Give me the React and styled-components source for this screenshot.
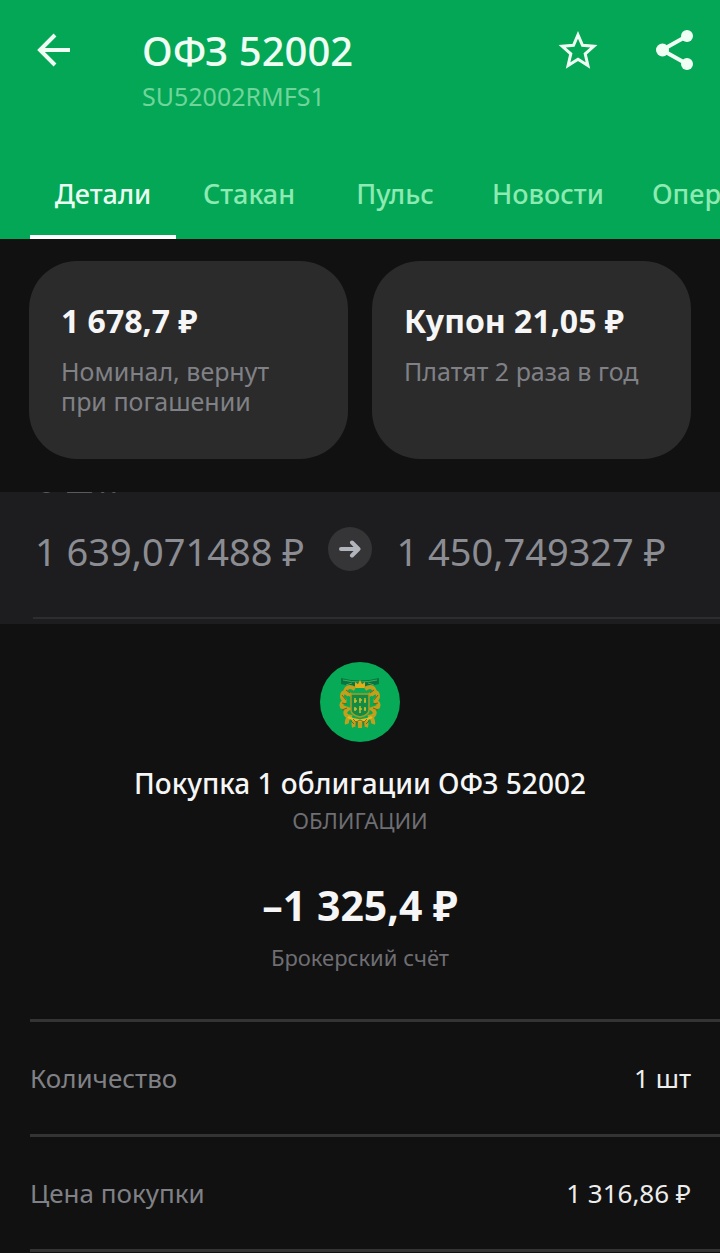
import React, { useState } from "react";
import styled, { createGlobalStyle } from "styled-components";

const color = {
  green: "#04a755",
  page: "#111111",
  card: "#2b2b2b",
  band: "#1d1d1f",
  line: "#343434",
  text: "#f6f6f6",
  muted: "#808186",
};

const GlobalStyle = createGlobalStyle`
  *, *::before, *::after { box-sizing: border-box; }
  body {
    margin: 0;
    background: ${color.page};
    color: ${color.text};
    font-family: "Noto Sans", "Open Sans", sans-serif;
    overflow-x: hidden;
  }
  h1, h2, p, dl, dd, dt { margin: 0; font-weight: 400; }
`;

const Header = styled.header`
  background: ${color.green};
  color: #effff4;
`;

const TopBar = styled.div`
  display: flex;
  align-items: flex-start;
  padding: 24px 21px 0 30px;
  height: 148px;
`;

const IconButton = styled.button`
  display: flex;
  align-items: center;
  justify-content: center;
  width: 48px;
  height: 52px;
  padding: 0;
  border: 0;
  background: none;
  color: inherit;
  cursor: pointer;
`;

const Heading = styled.div`
  flex: 1;
  margin-left: 64px;
`;

const Title = styled.h1`
  && { font-weight: 500; }
  font-size: 40px;
  line-height: 54px;
`;

const Ticker = styled.p`
  font-size: 25px;
  line-height: 36px;
  color: #6fd59b;
`;

const Actions = styled.div`
  display: flex;
  gap: 49px;
`;

const Tabs = styled.nav`
  display: flex;
  padding-left: 30px;
  overflow: hidden;
`;

const Tab = styled.button`
  flex: none;
  min-width: 146px;
  height: 91px;
  padding: 3px 24px 0;
  border: 0;
  border-bottom: 4px solid ${(p) => (p.$active ? "#ffffff" : "transparent")};
  background: none;
  color: ${(p) => (p.$active ? "#e9fff1" : "#8ceab2")};
  font: inherit;
  font-size: 27px;
  font-weight: 500;
  cursor: pointer;
`;

const Cards = styled.section`
  display: grid;
  grid-template-columns: 1fr 1fr;
  gap: 24px;
  padding: 22px 29px 33px;
`;

const Card = styled.article`
  min-height: 198px;
  padding: 36px 32px;
  border-radius: 48px;
  background: ${color.card};
`;

const CardValue = styled.h2`
  && { font-weight: 700; }
  font-size: 32px;
  line-height: 48px;
  white-space: nowrap;
`;

const CardNote = styled.p`
  margin-top: 11px;
  font-size: 25px;
  line-height: 30px;
  color: ${color.muted};
`;

const Band = styled.section`
  background: ${color.band};
  padding-bottom: 5px;
`;

const ScrolledRow = styled.div`
  display: flex;
  align-items: flex-end;
  height: 2px;
  padding-left: 36px;
  overflow: hidden;
  color: #5a5a5c;
  font-size: 34px;
  line-height: 28px;
`;

const PriceChange = styled.div`
  display: flex;
  align-items: center;
  gap: 24px;
  margin-left: 33px;
  padding: 0 0 14px 2px;
  height: 125px;
  border-bottom: 2px solid #2d2d2f;
`;

const Price = styled.span`
  padding-top: 4px;
  font-size: 38px;
  line-height: 54px;
  color: #8c8d93;
  white-space: nowrap;
`;

const ArrowBadge = styled.span`
  flex: none;
  display: flex;
  align-items: center;
  justify-content: center;
  width: 44px;
  height: 44px;
  border-radius: 50%;
  background: #353537;
  color: #b2b4bb;
`;

const Summary = styled.section`
  display: flex;
  flex-direction: column;
  align-items: center;
  padding-top: 37px;
  height: 395px;
  text-align: center;
`;

const OperationTitle = styled.h2`
  && { font-weight: 500; }
  margin-top: 20px;
  font-size: 28px;
  line-height: 40px;
`;

const Caption = styled.p`
  font-size: 22px;
  line-height: 34px;
  color: #6e6e73;
`;

const Amount = styled.p`
  && { font-weight: 700; }
  margin: 40px 0 7px;
  font-size: 41px;
  line-height: 56px;
`;

const Details = styled.dl`
  margin-left: 30px;
  border-top: 3px solid ${color.line};
`;

const DetailRow = styled.div`
  display: flex;
  align-items: center;
  justify-content: space-between;
  height: 115px;
  padding-right: 29px;
  border-bottom: 3px solid ${color.line};
  font-size: 26px;
  line-height: 36px;
`;

const Label = styled.dt`
  color: ${color.muted};
`;

const Value = styled.dd`
  color: #ededed;
`;

const BackIcon = () => (
  <svg width="34" height="34" viewBox="0 0 34 34" fill="none" stroke="currentColor" strokeWidth="4" aria-hidden="true">
    <path d="M33 17H4M18 2 3 17l15 15" />
  </svg>
);

const StarIcon = () => (
  <svg width="40" height="40" viewBox="0 0 40 40" fill="none" stroke="currentColor" strokeWidth="3" aria-hidden="true">
    <path d="M20 4.800 24.500 15.300 35.800 16.300 27.200 23.800 29.900 35.500 20 29.300 10.100 35.500 12.800 23.800 4.200 16.300 15.500 15.300Z" />
  </svg>
);

const ShareIcon = () => (
  <svg width="40" height="42" viewBox="0 0 40 42" aria-hidden="true">
    <path d="M32 7 7 21l25 14" fill="none" stroke="currentColor" strokeWidth="4" />
    <g fill="currentColor">
      <circle cx="32" cy="7" r="6" />
      <circle cx="7.5" cy="21" r="6.5" />
      <circle cx="32" cy="35" r="6" />
    </g>
  </svg>
);

const ArrowIcon = () => (
  <svg width="22" height="20" viewBox="0 0 22 20" fill="none" stroke="currentColor" strokeWidth="4" strokeLinecap="round" strokeLinejoin="round" aria-hidden="true">
    <path d="M2 10h17M13 3.5l6.500 6.500-6.500 6.500" />
  </svg>
);

const Emblem = () => (
  <svg width="82" height="82" viewBox="0 0 82 82" role="img" aria-label="ОФЗ">
    <circle cx="41" cy="41" r="40" fill="#06aa57" />
    <path d="M22 17q19 5 38 0v6q-19 5-38 0Z" fill="#087440" />
    <path d="M24 19q17 4 34 0M27 24l6-2M49 22l6 2" fill="none" stroke="#3fae59" strokeWidth="1" />
    <path d="M36 27v-6l3 2 2-4 2 4 3-2v6Z" fill="#dfae19" />
    <g fill="none" stroke="#c0a01c" strokeWidth="4">
      <path d="M36 28q-8-5-10 3l6 3M46 28q8-5 10 3l-6 3" />
      <path d="M30 34q-7-6-7 2 1 3 4 4-6 1-4 6l6 2q-5 3-1 7l5 1" />
      <path d="M52 34q7-6 7 2-1 3-4 4 6 1 4 6l-6 2q5 3 1 7l-5 1" />
      <path d="M30 56q-3 4-2 7M35 58q-1 5 0 8M47 58q1 5 0 8M52 56q3 4 2 7M41 59v8" />
    </g>
    <g fill="none" stroke="#75641a" strokeWidth="1">
      <path d="m23 34 4 5m-4 3 5 1m-5 6 5-2M59 34l-4 5m4 3-5 1m5 6-5-2M27 29l4 3M55 29l-4 3" />
      <path d="m32 60 3 3m3-3-1 5m7-5 1 5m5-5-3 3" />
    </g>
    <path d="M32 33h18v16q0 5-9 7-9-2-9-7Z" fill="#128c45" stroke="#ac9922" strokeWidth="1.500" />
    <path d="M36 37v5m5-5v5m5-5v5M36 46v4m5-5v7m5-6v4M35 40h3m2-1h3m2 1h2M35 48h3m2 0h3m2 0h2" fill="none" stroke="#c9bd2c" strokeWidth="1.500" />
    <path d="M29 56q12 7 24 0" fill="none" stroke="#e0bd24" strokeWidth="2.500" />
    <path d="m34 58 3 3 4-2 4 2 3-3" fill="none" stroke="#8b6819" strokeWidth="1" />
  </svg>
);

const tabs = ["Детали", "Стакан", "Пульс", "Новости", "Операции"];

const details = [
  { label: "Количество", value: "1 шт" },
  { label: "Цена покупки", value: "1 316,86 ₽" },
];

export default function App() {
  const [active, setActive] = useState(tabs[0]);

  return (
    <>
      <GlobalStyle />
      <Header>
        <TopBar>
          <IconButton aria-label="Назад">
            <BackIcon />
          </IconButton>
          <Heading>
            <Title>ОФЗ 52002</Title>
            <Ticker>SU52002RMFS1</Ticker>
          </Heading>
          <Actions>
            <IconButton aria-label="В избранное">
              <StarIcon />
            </IconButton>
            <IconButton aria-label="Поделиться">
              <ShareIcon />
            </IconButton>
          </Actions>
        </TopBar>
        <Tabs>
          {tabs.map((name) => (
            <Tab key={name} $active={name === active} onClick={() => setActive(name)}>
              {name}
            </Tab>
          ))}
        </Tabs>
      </Header>

      <main>
        <Cards>
          <Card>
            <CardValue>1 678,7 ₽</CardValue>
            <CardNote>Номинал, вернут при погашении</CardNote>
          </Card>
          <Card>
            <CardValue>Купон 21,05 ₽</CardValue>
            <CardNote>Платят 2 раза в год</CardNote>
          </Card>
        </Cards>

        <Band>
          <ScrolledRow aria-hidden="true">6 шт.</ScrolledRow>
          <PriceChange>
            <Price>1 639,071488 ₽</Price>
            <ArrowBadge>
              <ArrowIcon />
            </ArrowBadge>
            <Price>1 450,749327 ₽</Price>
          </PriceChange>
        </Band>

        <Summary>
          <Emblem />
          <OperationTitle>Покупка 1 облигации ОФЗ 52002</OperationTitle>
          <Caption>ОБЛИГАЦИИ</Caption>
          <Amount>–1 325,4 ₽</Amount>
          <Caption>Брокерский счёт</Caption>
        </Summary>

        <Details>
          {details.map((row) => (
            <DetailRow key={row.label}>
              <Label>{row.label}</Label>
              <Value>{row.value}</Value>
            </DetailRow>
          ))}
        </Details>
      </main>
    </>
  );
}
